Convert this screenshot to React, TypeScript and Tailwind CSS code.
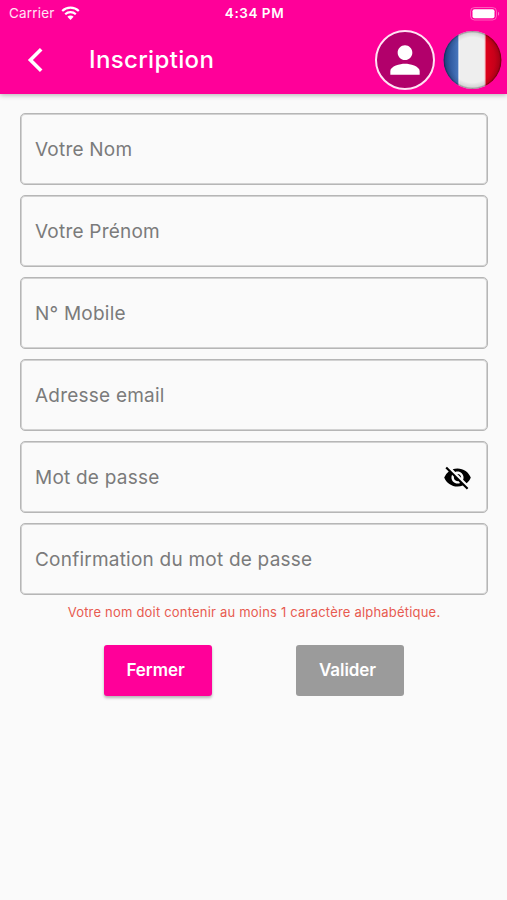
import { MdPerson, MdVisibilityOff } from "react-icons/md";

const fields = [
  { label: "Votre Nom" },
  { label: "Votre Prénom" },
  { label: "N° Mobile" },
  { label: "Adresse email" },
  { label: "Mot de passe", secret: true },
  { label: "Confirmation du mot de passe" },
];

const StatusBar = () => (
  <div className="grid h-[27px] grid-cols-3 items-center pr-[7px] pl-[9px] text-[13.5px] leading-none">
    <div className="flex items-center gap-[6px]">
      <span className="pt-px tracking-[0.2px] text-white/90">Carrier</span>
      <svg width="19" height="15" viewBox="0 0 19 15" fill="none" stroke="white" strokeWidth="2.2">
        <path d="M1.2 5a12 12 0 0 1 16.6 0" />
        <path d="M4.2 8.2a7.7 7.7 0 0 1 10.6 0" />
        <path d="M9.5 13.9 6.4 10.8a4.4 4.4 0 0 1 6.2 0z" fill="white" stroke="none" />
      </svg>
    </div>
    <span className="pt-px text-center font-semibold tracking-[0.55px]">4:34 PM</span>
    <svg className="justify-self-end" width="30" height="14" viewBox="0 0 30 14">
      <rect x="0.5" y="0.5" width="26" height="12.5" rx="4" fill="none" stroke="white" strokeOpacity="0.35" />
      <rect x="2.5" y="2.3" width="22" height="9" rx="2" fill="white" />
      <path d="M28 4.7c1.5.7 1.5 3.4 0 4.1z" fill="white" fillOpacity="0.45" />
    </svg>
  </div>
);

const FrenchFlag = () => (
  <svg width="60" height="60" viewBox="0 0 60 60">
    <defs>
      <clipPath id="ball">
        <circle cx="29.5" cy="30" r="29" />
      </clipPath>
      <linearGradient id="blue">
        <stop offset="0" stopColor="#1d4389" />
        <stop offset="1" stopColor="#4a79bf" />
      </linearGradient>
      <linearGradient id="red">
        <stop offset="0" stopColor="#e0001b" />
        <stop offset="1" stopColor="#b00018" />
      </linearGradient>
      <radialGradient id="shade">
        <stop offset="0.78" stopColor="#000" stopOpacity="0" />
        <stop offset="0.93" stopColor="#000" stopOpacity="0.1" />
        <stop offset="1" stopColor="#000" stopOpacity="0.45" />
      </radialGradient>
    </defs>
    <g clipPath="url(#ball)">
      <rect width="16" height="60" fill="url(#blue)" />
      <rect x="16" width="26" height="60" fill="#eeeeee" />
      <rect x="42" width="18" height="60" fill="url(#red)" />
      <rect x="15.4" width="1" height="60" fill="#ffffff" />
      <rect x="41.6" width="1" height="60" fill="#f7b5bd" />
      <circle cx="29.5" cy="30" r="29" fill="url(#shade)" />
    </g>
  </svg>
);

const Header = () => (
  <header className="h-[94px] bg-[#ff0099] text-white shadow-[0_1px_5px_rgba(0,0,0,0.3)]">
    <StatusBar />
    <div className="flex h-[65px] items-center pr-[4px] pl-[27px]">
      <svg width="18" height="26" viewBox="0 0 18 26" fill="none" stroke="white" strokeWidth="3.6">
        <path d="M14.2 2.2 3.4 13l10.8 10.8" />
      </svg>
      <h1 className="ml-[44px] flex-1 pt-px text-[24px] font-medium tracking-[0.35px]">Inscription</h1>
      <div className="flex size-[60px] items-center justify-center rounded-full border-2 border-[#ffe3f4] bg-[#b2006b]">
        <MdPerson className="size-[44px] shrink-0" />
      </div>
      <div className="ml-[8px]">
        <FrenchFlag />
      </div>
    </div>
  </header>
);

export default function App() {
  return (
    <div className="h-[900px] w-[507px] overflow-hidden bg-[#fafafa] font-['Inter',sans-serif]">
      <Header />
      <main className="pt-[19px] pr-[19px] pl-5">
        <div className="space-y-[10px]">
          {fields.map((field) => (
            <div
              key={field.label}
              className="flex h-[72px] items-center justify-between rounded-[5px] border border-[#b6b6b6] pr-[15px] pl-[14px] shadow-[inset_0_0_0_1px_#d2d2d2]"
            >
              <span className="pt-[2px] text-[19px] tracking-[0.22px] text-[#7b7b7b]">{field.label}</span>
              {field.secret && <MdVisibilityOff className="size-[29px] text-black" />}
            </div>
          ))}
        </div>
        <p className="mt-[7px] text-center text-[13px] leading-5 tracking-[0.2px] text-[#e85a50]">
          Votre nom doit contenir au moins 1 caractère alphabétique.
        </p>
        <div className="mt-[23px] flex gap-[84px] pl-[84px] text-[17px] font-semibold tracking-[-0.05px] text-white">
          <button className="h-[51px] w-[108px] rounded-[3px] bg-[#ff0099] pt-px pr-[5px] shadow-[0_2px_3px_rgba(0,0,0,0.28)]">
            Fermer
          </button>
          <button className="h-[51px] w-[108px] rounded-[3px] bg-[#9b9b9b] pt-px pr-[5px]">Valider</button>
        </div>
      </main>
    </div>
  );
}
